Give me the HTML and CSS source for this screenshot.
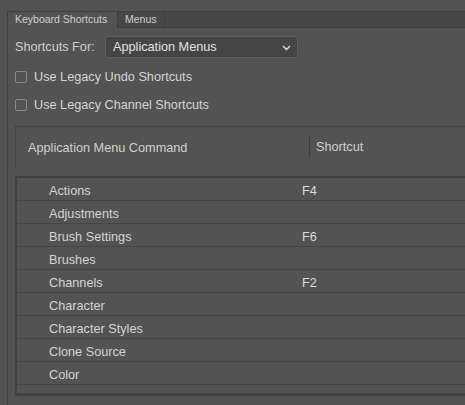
FILE: index.html
```html
<!DOCTYPE html>
<html>
<head>
<meta charset="utf-8">
<link rel="stylesheet" href="styles.css">
</head>
<body>
<div class="frame">
  <div class="tabs">
    <div class="tab active">Keyboard Shortcuts</div>
    <div class="tab">Menus</div>
  </div>
  <div class="content">
    <div class="for-row">
      <span class="label">Shortcuts For:</span>
      <div class="select">
        <span>Application Menus</span>
        <svg class="chev" width="9" height="6" viewBox="0 0 9 6"><path d="M1 1 L4.5 4.5 L8 1" fill="none" stroke="#e0e0e0" stroke-width="1.4"/></svg>
      </div>
    </div>
    <label class="check"><span class="box"></span>Use Legacy Undo Shortcuts</label>
    <label class="check"><span class="box"></span>Use Legacy Channel Shortcuts</label>
    <div class="thead">
      <div class="th cmd">Application Menu Command</div>
      <div class="th sc">Shortcut</div>
    </div>
    <div class="tbody">
      <div class="row"><span class="name">Actions</span><span class="key">F4</span></div>
      <div class="row"><span class="name">Adjustments</span><span class="key"></span></div>
      <div class="row"><span class="name">Brush Settings</span><span class="key">F6</span></div>
      <div class="row"><span class="name">Brushes</span><span class="key"></span></div>
      <div class="row"><span class="name">Channels</span><span class="key">F2</span></div>
      <div class="row"><span class="name">Character</span><span class="key"></span></div>
      <div class="row"><span class="name">Character Styles</span><span class="key"></span></div>
      <div class="row"><span class="name">Clone Source</span><span class="key"></span></div>
      <div class="row"><span class="name">Color</span><span class="key"></span></div>
      <div class="row partial"><span class="name"></span><span class="key"></span></div>
    </div>
  </div>
</div>
</body>
</html>
```
FILE: styles.css
```css
html, body {
  margin: 0;
  padding: 0;
  background: #535353;
  height: 405px;
  overflow: hidden;
  font-family: "Liberation Sans", Arial, sans-serif;
  color: #d4d4d4;
}
.frame {
  margin: 11px 0 0 7px;
  border-left: 1px solid #3e3e3e;
  border-top: 1px solid #3e3e3e;
  height: 400px;
}
.tabs {
  display: flex;
  height: 15px;
  background: #474747;
  border-bottom: 1px solid #3e3e3e;
}
.tab {
  font-size: 10.5px;
  line-height: 15px;
  padding: 0 7px;
  color: #cfcfcf;
  border-right: 1px solid #3e3e3e;
}
.tab.active {
  background: #535353;
  width: 95px;
  margin-bottom: -1px;
  height: 16px;
}
.tab:not(.active) {
  width: 32px;
}
.content {
  padding: 0 0 0 7px;
}
.for-row {
  display: flex;
  align-items: center;
  margin-top: 8px;
  height: 22px;
}
.label {
  font-size: 12.7px;
  color: #cfcfcf;
  width: 90px;
}
.select {
  width: 193px;
  height: 22px;
  box-sizing: border-box;
  background: #454545;
  border: 1px solid #5e5e5e;
  border-radius: 3px;
  display: flex;
  align-items: center;
  justify-content: space-between;
  padding: 0 6px 0 7px;
  font-size: 12.7px;
  color: #e2e2e2;
}
.select .chev { margin-top: 1px; }
.check {
  display: flex;
  align-items: center;
  font-size: 12.7px;
  color: #d4d4d4;
  height: 16px;
  margin-top: 11px;
}
.check + .check { margin-top: 12px; }
.box {
  width: 10px;
  height: 10px;
  border: 1px solid #8a8a8a;
  border-radius: 2px;
  background: #535353;
  margin-right: 7px;
}
.thead {
  margin-top: 13px;
  border-top: 1px solid #444;
  border-left: 1px solid #444;
  height: 41px;
  display: flex;
  align-items: center;
  font-size: 12.7px;
  color: #d0d0d0;
}
.th.cmd {
  padding-left: 12px;
  width: 281px;
}
.th.sc {
  border-left: 1px solid #3e3e3e;
  padding-left: 6px;
  height: 21px;
  line-height: 21px;
}
.tbody {
  margin-top: 8px;
  border-top: 2px solid #404040;
  border-left: 2px solid #404040;
  border-bottom: 2px solid #404040;
  font-size: 12.7px;
}
.row {
  display: flex;
  height: 18px;
  padding-top: 4px;
  line-height: 19px;
  border-bottom: 1px solid #454545;
}
.row .name {
  width: 253px;
  padding-left: 32px;
}
.row .key { color: #dcdcdc; }
.row.partial { height: 4px; }
```
